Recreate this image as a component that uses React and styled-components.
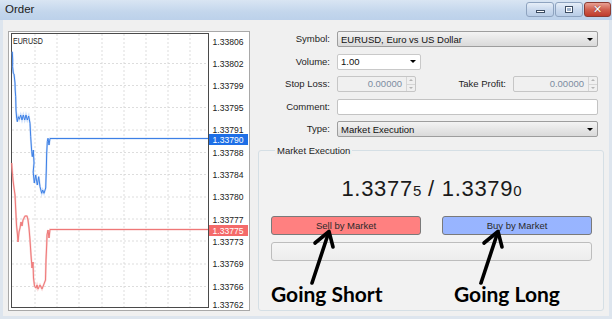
import React from "react";
import styled, { createGlobalStyle } from "styled-components";

const GlobalStyle = createGlobalStyle`
  html, body {
    margin: 0;
    padding: 0;
    background: #f0f0f0;
  }
  body {
    font-family: "Liberation Sans", Arial, sans-serif;
  }
  * {
    box-sizing: border-box;
  }
`;

const Window = styled.div`
  width: 612px;
  height: 319px;
  display: flex;
  flex-direction: column;
  background: #f0f0f0;
  overflow: hidden;
`;

const TitleBar = styled.div`
  height: 20px;
  flex: none;
  display: flex;
  justify-content: space-between;
  align-items: flex-start;
  padding-left: 5px;
  background: linear-gradient(#d9e5f3, #c3d6ec 60%, #bcd1ea);
`;

const Title = styled.span`
  font-size: 11.5px;
  line-height: 18px;
  color: #1b1b1b;
`;

const Controls = styled.div`
  display: flex;
  gap: 1px;
  margin-top: 2px;
  margin-right: 1px;
`;

const WinButton = styled.div`
  width: ${(p) => (p.$close ? "27px" : "28px")};
  height: 15px;
  border: 1px solid ${(p) => (p.$close ? "#8b3b32" : "#8ea3bf")};
  border-radius: 3px;
  display: flex;
  align-items: center;
  justify-content: center;
  background: ${(p) =>
    p.$close
      ? "linear-gradient(#e8a093, #d0604f 50%, #c03c2c)"
      : "linear-gradient(#e6eef8, #cbdaee 50%, #b9cde6)"};
`;

const MinGlyph = styled.span`
  width: 9px;
  height: 3px;
  background: #fff;
  border: 1px solid #3d4d63;
  margin-top: 4px;
`;

const RestoreGlyph = styled.span`
  width: 8px;
  height: 7px;
  border: 1px solid #3d4d63;
  box-shadow: inset 0 0 0 1px #fff;
  background: #9fb3cc;
`;

const CloseGlyph = styled.span`
  color: #fff;
  font-family: "DejaVu Sans", sans-serif;
  font-weight: 700;
  font-size: 11px;
  line-height: 11px;
  text-shadow: 0 0 1px #5a1a12;
`;

const Content = styled.div`
  flex: 1;
  display: flex;
  align-items: flex-start;
  padding: 11px 0 0 5px;
  border: 3px solid #dde5ee;
  border-top: none;
`;

const ChartPanel = styled.div`
  width: 242px;
  height: 280px;
  flex: none;
  background: #fff;
  border: 1px solid #a8a8a8;
  svg {
    display: block;
  }
`;

const RightPane = styled.div`
  width: 346px;
  margin-left: 8px;
  height: 280px;
  display: flex;
  flex-direction: column;
`;

const Form = styled.div`
  display: grid;
  grid-template-columns: 72px 1fr;
  column-gap: 7px;
  grid-auto-rows: 16px;
  row-gap: 6.5px;
  padding-right: 6px;
`;

const Label = styled.span`
  font-size: 9.5px;
  line-height: 16px;
  color: #1e1e1e;
  text-align: right;
  white-space: nowrap;
`;

const Combo = styled.div`
  width: ${(p) => p.$width || "100%"};
  height: 16px;
  display: flex;
  align-items: center;
  justify-content: space-between;
  padding: 0 4px 0 3px;
  font-size: 9.5px;
  color: #111;
  border: 1px solid ${(p) => (p.$white ? "#c9c9c9" : "#9d9d9d")};
  border-radius: 2px;
  background: ${(p) =>
    p.$white ? "#fff" : "linear-gradient(#f3f3f3, #e6e6e6 50%, #dadada)"};
`;

const DropArrow = styled.span`
  width: 0;
  height: 0;
  border-left: 3px solid transparent;
  border-right: 3px solid transparent;
  border-top: 3px solid #000;
`;

const InlineRow = styled.div`
  display: flex;
  align-items: center;
`;

const SpinBox = styled.div`
  width: ${(p) => p.$width};
  height: 16px;
  display: flex;
  border: 1px solid #c6c6c6;
  border-radius: 2px;
  background: #f0f0f0;
`;

const SpinValue = styled.span`
  flex: 1;
  text-align: right;
  padding-right: 4px;
  font-size: 9.5px;
  line-height: 14px;
  color: #7d8ca0;
`;

const Spinner = styled.div`
  width: 9px;
  display: flex;
  flex-direction: column;
  border-left: 1px solid #d6d6d6;
`;

const SpinHalf = styled.span`
  flex: 1;
  display: flex;
  align-items: center;
  justify-content: center;
  border-bottom: ${(p) => (p.$up ? "1px solid #d6d6d6" : "none")};
  &::after {
    content: "";
    border-left: 2px solid transparent;
    border-right: 2px solid transparent;
    ${(p) =>
      p.$up
        ? "border-bottom: 2px solid #b4b4b4;"
        : "border-top: 2px solid #b4b4b4;"}
  }
`;

const SideLabel = styled(Label)`
  margin-left: auto;
  margin-right: 7px;
`;

const TextInput = styled.div`
  height: 16px;
  background: #fff;
  border: 1px solid #c3c3c3;
  border-radius: 2px;
`;

const Group = styled.div`
  margin-top: 13px;
  flex: 1;
  border: 1px solid #d5dfe5;
  border-radius: 3px;
  padding: 0 11px 0 12px;
  display: flex;
  flex-direction: column;
  background: #f2f2f2;
`;

const Legend = styled.span`
  align-self: flex-start;
  margin: -6px 0 0 4px;
  padding: 0 2px;
  background: #f0f0f0;
  font-size: 9.5px;
  line-height: 11px;
  color: #1e1e1e;
`;

const Quote = styled.div`
  margin-top: 21px;
  text-align: center;
  font-size: 22px;
  letter-spacing: 0.7px;
  line-height: 24px;
  color: #1a1a1a;
  white-space: pre;
  small {
    font-size: 15px;
    letter-spacing: 0;
  }
`;

const Buttons = styled.div`
  margin-top: 13px;
  display: grid;
  grid-template-columns: 150px 150px;
  column-gap: 21px;
`;

const TradeButton = styled.div`
  height: 19px;
  display: flex;
  align-items: center;
  justify-content: center;
  border: 1px solid #7a7a7a;
  border-radius: 3px;
  font-size: 9.5px;
  color: #2a2a2a;
  background-color: ${(p) => (p.$buy ? "#8cabff" : "#ff8080")};
  background-image: ${(p) =>
    p.$buy
      ? "radial-gradient(#a6bfff 0.6px, transparent 0.8px)"
      : "none"};
  background-size: 2px 2px;
`;

const Progress = styled.div`
  margin-top: 7px;
  height: 19px;
  border: 1px solid #bdbdbd;
  border-radius: 3px;
  background: linear-gradient(#f5f5f5, #ededed);
`;

const Notes = styled.div`
  margin-top: 21px;
  display: grid;
  grid-template-columns: 150px 150px;
  column-gap: 21px;
`;

const Note = styled.div`
  position: relative;
  padding-left: ${(p) => p.$indent}px;
  font-family: Lato, "Open Sans", sans-serif;
  font-weight: 700;
  font-size: 21px;
  line-height: 24px;
  color: #000;
`;

const NoteText = styled.span`
  position: relative;
`;

const ArrowSvg = styled.svg`
  position: absolute;
  left: ${(p) => p.$left}px;
  top: -54px;
`;

const GRID_X = [35, 57, 79, 102, 124, 146, 168, 190];
const GRID_Y = [63.5, 85.5, 107.5, 130, 152.5, 174.5, 197, 219, 241, 264, 286.5];
const TICKS = [
  [42, "1.33806"],
  [64, "1.33802"],
  [86, "1.33799"],
  [108, "1.33795"],
  [129.5, "1.33791"],
  [153, "1.33788"],
  [175, "1.33784"],
  [197, "1.33780"],
  [220, "1.33777"],
  [242, "1.33773"],
  [264, "1.33769"],
  [287, "1.33766"],
  [304.5, "1.33762"],
];

const ASK = [
  [12.3, 51.7], [12.7, 60], [12.6, 66.7], [13.3, 73.3], [14, 74], [15, 83],
  [15.2, 90], [15.7, 96.7], [16, 110], [16.7, 118.3], [17.3, 121.7],
  [18.3, 116.7], [19.3, 119.3], [20.7, 115], [22, 120], [23.3, 115],
  [24.7, 120], [26, 115], [27.3, 120], [28.7, 116], [30, 123.3],
  [30.7, 136.7], [31.7, 151.7], [32.3, 156.7], [33.3, 150], [34, 163],
  [33.2, 172], [34.3, 183], [35.7, 175], [37.3, 185], [38.7, 176.7],
  [40, 186.7], [41.7, 193.3], [42.7, 190], [44, 193.3], [45.7, 188],
  [46.3, 170], [46.7, 153], [47.3, 141.7], [48, 138.3], [49, 145],
  [50, 138.5], [208, 138.5],
];

const BID = [
  [11.7, 163], [12.3, 172], [13, 180], [14, 188], [15, 195], [15.5, 205],
  [16, 215], [16.5, 225], [17.5, 235], [18, 242], [19, 232], [20, 228],
  [21, 222], [22, 226], [23, 220], [24, 218], [25, 216], [27, 216],
  [28, 220], [29, 228], [30, 240], [31, 255], [32, 268], [33, 262],
  [33.5, 278], [34.5, 286], [36, 288], [37, 285], [38, 289], [40, 285],
  [42, 289], [44, 284], [45.5, 280], [46, 260], [46.7, 245], [47, 235],
  [48, 230], [49, 238], [50, 229.5], [208, 229.5],
];

const toPoints = (pts) => pts.map(([x, y]) => `${x},${y}`).join(" ");

const PriceChart = () => (
  <svg width="240" height="278" viewBox="9 32 240 278">
    <rect x="9" y="32" width="240" height="278" fill="#fff" />
    {GRID_X.map((x) => (
      <line
        key={x}
        x1={x}
        y1="34"
        x2={x}
        y2="307"
        stroke="#d4d4d4"
        strokeWidth="0.8"
        strokeDasharray="2 2"
      />
    ))}
    {GRID_Y.map((y) => (
      <line
        key={y}
        x1="12"
        y1={y}
        x2="208"
        y2={y}
        stroke="#d4d4d4"
        strokeWidth="0.8"
        strokeDasharray="2 2"
      />
    ))}
    <rect x="11.5" y="33.5" width="197" height="274" fill="none" stroke="#4a4a4a" />
    <text
      x="13"
      y="43.5"
      fontSize="9"
      fill="#222"
      fontFamily="Liberation Sans, Arial, sans-serif"
      textLength="30"
      lengthAdjust="spacingAndGlyphs"
    >
      EURUSD
    </text>
    <polyline points={toPoints(BID)} fill="none" stroke="#f3a0a0" strokeWidth="2" opacity="0.5" />
    <polyline points={toPoints(BID)} fill="none" stroke="#ef7777" strokeWidth="1" />
    <polyline points={toPoints(ASK)} fill="none" stroke="#9cc0f5" strokeWidth="2" opacity="0.5" />
    <polyline points={toPoints(ASK)} fill="none" stroke="#3d80e6" strokeWidth="1" />
    {TICKS.map(([y, t]) => (
      <text
        key={t}
        x="212.5"
        y={y + 3.3}
        fontSize="9.5"
        fill="#222"
        fontFamily="Liberation Sans, Arial, sans-serif"
        textLength="31"
        lengthAdjust="spacingAndGlyphs"
      >
        {t}
      </text>
    ))}
    <rect x="209" y="134" width="39" height="11" fill="#1e6fe6" />
    <text
      x="212.5"
      y="142.8"
      fontSize="9.5"
      fill="#fff"
      fontFamily="Liberation Sans, Arial, sans-serif"
      textLength="31"
      lengthAdjust="spacingAndGlyphs"
    >
      1.33790
    </text>
    <rect x="209" y="225" width="39" height="11" fill="#f46a6a" />
    <text
      x="212.5"
      y="233.8"
      fontSize="9.5"
      fill="#fff"
      fontFamily="Liberation Sans, Arial, sans-serif"
      textLength="31"
      lengthAdjust="spacingAndGlyphs"
    >
      1.33775
    </text>
  </svg>
);

const Arrow = ({ left }) => (
  <ArrowSvg $left={left} width="32" height="58" viewBox="0 0 32 58">
    <g stroke="#000" strokeWidth="3.6" strokeLinecap="round" strokeLinejoin="round" fill="none">
      <path d="M6 55 L22.5 5" />
      <path d="M9 15 L23 3.5 L27 19" />
    </g>
  </ArrowSvg>
);

const App = () => {
  return (
    <>
      <GlobalStyle />
      <Window>
        <TitleBar>
          <Title>Order</Title>
          <Controls>
            <WinButton>
              <MinGlyph />
            </WinButton>
            <WinButton>
              <RestoreGlyph />
            </WinButton>
            <WinButton $close>
              <CloseGlyph>✕</CloseGlyph>
            </WinButton>
          </Controls>
        </TitleBar>
        <Content>
          <ChartPanel>
            <PriceChart />
          </ChartPanel>
          <RightPane>
            <Form>
              <Label>Symbol:</Label>
              <Combo>
                <span>EURUSD, Euro vs US Dollar</span>
                <DropArrow />
              </Combo>

              <Label>Volume:</Label>
              <Combo $white $width="84px">
                <span>1.00</span>
                <DropArrow />
              </Combo>

              <Label>Stop Loss:</Label>
              <InlineRow>
                <SpinBox $width="79px">
                  <SpinValue>0.00000</SpinValue>
                  <Spinner>
                    <SpinHalf $up />
                    <SpinHalf />
                  </Spinner>
                </SpinBox>
                <SideLabel>Take Profit:</SideLabel>
                <SpinBox $width="85px">
                  <SpinValue>0.00000</SpinValue>
                  <Spinner>
                    <SpinHalf $up />
                    <SpinHalf />
                  </Spinner>
                </SpinBox>
              </InlineRow>

              <Label>Comment:</Label>
              <TextInput />

              <Label>Type:</Label>
              <Combo>
                <span>Market Execution</span>
                <DropArrow />
              </Combo>
            </Form>

            <Group>
              <Legend>Market Execution</Legend>
              <Quote>
                1.3377<small>5</small> / 1.3379<small>0</small>
              </Quote>
              <Buttons>
                <TradeButton>Sell by Market</TradeButton>
                <TradeButton $buy>Buy by Market</TradeButton>
              </Buttons>
              <Progress />
              <Notes>
                <Note $indent={0}>
                  <Arrow left={35} />
                  <NoteText>Going Short</NoteText>
                </Note>
                <Note $indent={12}>
                  <Arrow left={33} />
                  <NoteText>Going Long</NoteText>
                </Note>
              </Notes>
            </Group>
          </RightPane>
        </Content>
      </Window>
    </>
  );
};

export default App;
